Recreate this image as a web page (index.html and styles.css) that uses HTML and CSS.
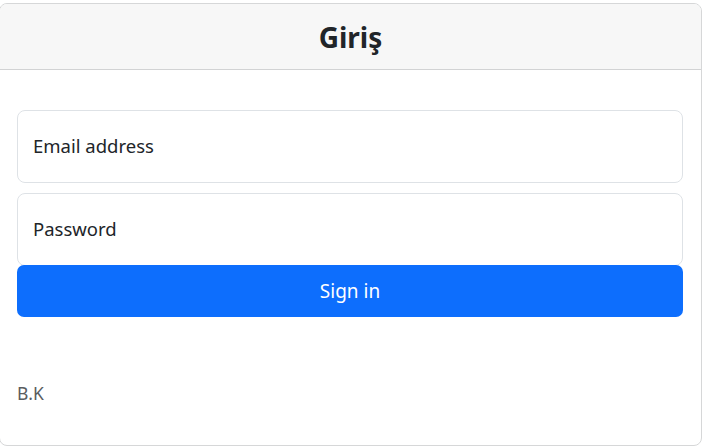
FILE: index.html
```html
<!DOCTYPE html>
<html lang="tr">
<head>
<meta charset="utf-8">
<link rel="stylesheet" href="styles.css">
</head>
<body>
<div class="card">
  <div class="card-header"><h1 class="title">Giriş</h1></div>
  <div class="card-body">
    <form class="form">
      <div class="field"><label class="label">Email address</label></div>
      <div class="field field-pass"><label class="label">Password</label></div>
      <button type="button" class="btn">Sign in</button>
    </form>
    <p class="footer-text">B.K</p>
  </div>
</div>
</body>
</html>
```
FILE: styles.css
```css
* { box-sizing: border-box; }
html, body { margin: 0; padding: 0; background: #fff; }
body {
  font-family: "Noto Sans", "Open Sans", sans-serif;
  color: #212529;
  overflow: hidden;
}
.card {
  margin: 3px 0 0 -1px;
  width: 703px;
  height: 443px;
  border: 1px solid #d6d7d8;
  border-radius: 8px;
  background: #fff;
  overflow: hidden;
}
.card-header {
  height: 66px;
  background: #f7f7f7;
  border-bottom: 1px solid #d2d3d4;
  display: flex;
  align-items: center;
  justify-content: center;
}
.title {
  margin: 0;
  font-size: 28px;
  font-weight: 700;
  line-height: 1;
  color: #212529;
}
.card-body {
  padding: 40px 18px 0 17px;
}
.form { display: flex; flex-direction: column; }
.field {
  height: 73px;
  border: 1px solid #dee2e6;
  border-radius: 8px;
  display: flex;
  align-items: center;
  padding-left: 15px;
}
.field-pass {
  margin-top: 10px;
  height: 73px;
}
.label { font-size: 18.5px; line-height: 1; color: #212529; }
.btn {
  position: relative;
  margin-top: -1px;
  height: 52px;
  border: none;
  border-radius: 7px;
  background: #0d6efd;
  color: #fff;
  font-family: inherit;
  font-size: 19px;
}
.footer-text {
  margin: 64px 0 0;
  font-size: 17.5px;
  color: #5a5d60;
}
```
